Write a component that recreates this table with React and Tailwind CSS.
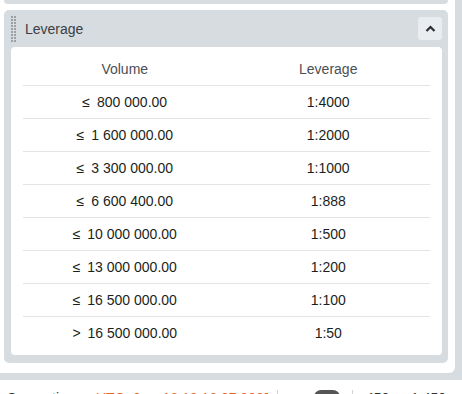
import React from "react";

const rows = [
  ["≤", "800 000.00", "1:4000"],
  ["≤", "1 600 000.00", "1:2000"],
  ["≤", "3 300 000.00", "1:1000"],
  ["≤", "6 600 400.00", "1:888"],
  ["≤", "10 000 000.00", "1:500"],
  ["≤", "13 000 000.00", "1:200"],
  ["≤", "16 500 000.00", "1:100"],
  [">", "16 500 000.00", "1:50"],
];

function Handle() {
  const dots = [];
  for (let i = 0; i < 9; i++) {
    dots.push(<rect key={"a" + i} x="0" y={i * 3} width="2" height="2" fill="#9aa0a4" />);
    dots.push(<rect key={"b" + i} x="3" y={i * 3} width="2" height="2" fill="#9aa0a4" />);
  }
  return (
    <svg width="5" height="26" viewBox="0 0 5 26" className="shrink-0">
      {dots}
    </svg>
  );
}

export default function App() {
  return (
    <div
      className="w-[462px] h-[394px] overflow-hidden bg-white flex flex-col"
      style={{ fontFamily: '"Liberation Sans", Arial, sans-serif' }}
    >
      <div className="bg-[#d6dce0] pr-[7px] pb-[7px]">
        <div className="bg-white rounded-br-[6px] pl-[4px] pr-[7px] pb-[10px]">
          <div className="h-[4px] bg-[#d6dce0] rounded-b-[5px]" />
          <div className="mt-[6px] bg-[#d6dce0] rounded-[5px] pb-[8px] pl-[7px] pr-[6px]">
            <div className="h-[37px] flex items-center">
              <Handle />
              <span className="ml-[9px] text-[14px] text-[#3b4045] leading-none">Leverage</span>
              <div className="ml-auto w-[24px] h-[23px] rounded-[3px] bg-[#e9edf0] flex items-center justify-center">
                <svg width="11" height="8" viewBox="0 0 11 8">
                  <path d="M1.5 6 L5.5 2 L9.5 6" fill="none" stroke="#2b2f33" strokeWidth="2.2" />
                </svg>
              </div>
            </div>
            <div className="bg-white rounded-[4px] h-[308px] px-[12px] pt-[7px]">
              <div className="grid grid-cols-2 h-[32px] items-center border-b border-[#e2e4e6] text-[14px] text-[#4a4f55] text-center">
                <div>Volume</div>
                <div>Leverage</div>
              </div>
              {rows.map((r, i) => (
                <div
                  key={i}
                  className={
                    "grid grid-cols-2 h-[33px] items-center text-[14px] text-[#1c1f22] text-center " +
                    (i < rows.length - 1 ? "border-b border-[#e2e4e6]" : "")
                  }
                >
                  <div>
                    <span className="mr-[7px]">{r[0]}</span>
                    {r[1]}
                  </div>
                  <div>{r[2]}</div>
                </div>
              ))}
            </div>
          </div>
        </div>
      </div>
      <div className="flex items-start pt-[10px] pl-[7px] text-[14px] leading-[16px] whitespace-nowrap">
        <span className="text-[#333] w-[89px] shrink-0">Server time:</span>
        <span className="text-[#e8661c] w-[172px] shrink-0 overflow-hidden">UTC+3 ··· 16:12:16 07.2025</span>
        <div className="ml-[9px] w-px h-[16px] bg-[#d0d4d7] shrink-0" />
        <div className="ml-[36px] w-[26px] h-[14px] rounded-[7px] bg-[#555] shrink-0" />
        <div className="ml-[12px] w-px h-[16px] bg-[#d0d4d7] shrink-0" />
        <span className="ml-[13px] text-[#333]">450 ··· 1 450</span>
      </div>
    </div>
  );
}
